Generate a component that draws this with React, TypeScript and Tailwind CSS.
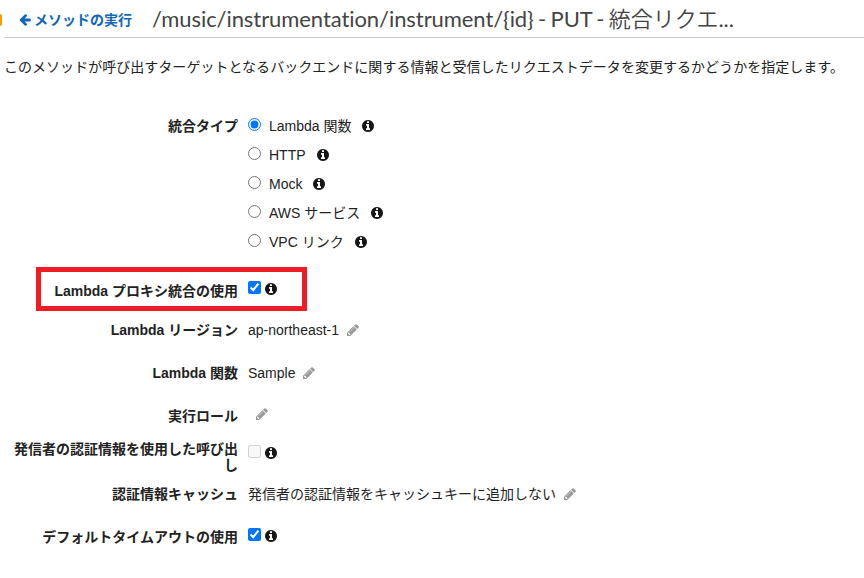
import React from 'react';

const Info = ({ className = '' }: { className?: string }) => (
  <svg viewBox="128 128 1536 1536" className={`size-3 shrink-0 fill-[#161616] ${className}`}>
    <path d="M1152 1376v-160q0-14-9-23t-23-9h-96v-512q0-14-9-23t-23-9h-320q-14 0-23 9t-9 23v160q0 14 9 23t23 9h96v320h-96q-14 0-23 9t-9 23v160q0 14 9 23t23 9h448q14 0 23-9t9-23zm-128-896v-160q0-14-9-23t-23-9h-192q-14 0-23 9t-9 23v160q0 14 9 23t23 9h192q14 0 23-9t9-23zm640 416q0 209-103 385.5t-279.5 279.5-385.5 103-385.5-103-279.5-279.5-103-385.5 103-385.5 279.5-279.5 385.5-103 385.5 103 279.5 279.5 103 385.5z" />
  </svg>
);

const Pencil = ({ className = 'ml-2' }: { className?: string }) => (
  <svg viewBox="128 128 1536 1536" className={`size-3 shrink-0 fill-[#999] ${className}`}>
    <path d="M491 1536l91-91-235-235-91 91v107h128v128h107zm523-928q0-22-22-22-10 0-17 7l-542 542q-7 7-7 17 0 22 22 22 10 0 17-7l542-542q7-7 7-17zm-54-192l416 416-832 832h-416v-416zm683 96q0 53-37 90l-166 166-416-416 166-165q36-38 90-38 53 0 91 38l235 234q37 39 37 91z" />
  </svg>
);

const ArrowLeft = () => (
  <svg viewBox="128 160 1536 1600" className="ml-[15px] mt-[2px] size-3 shrink-0 fill-[#1166bb]">
    <path d="M1664 896v128q0 53-32.5 90.5t-84.5 37.5h-704l293 294q38 36 38 90t-38 90l-75 76q-37 37-90 37-52 0-91-37l-651-652q-37-37-37-90 0-52 37-91l651-650q38-38 91-38 52 0 90 38l75 74q38 38 38 91t-38 91l-293 293h704q52 0 84.5 37.5t32.5 90.5z" />
  </svg>
);

function Row({ label, className, children }: { label: string; className: string; children: React.ReactNode }) {
  return (
    <div className={`flex ${className}`}>
      <div className="w-[238px] shrink-0 pl-3 text-right font-bold">{label}</div>
      <div className="ml-[10px] flex h-5 items-center whitespace-nowrap">{children}</div>
    </div>
  );
}

const Check = ({ checked, disabled }: { checked?: boolean; disabled?: boolean }) => (
  <input type="checkbox" className="mr-1 mb-[3px] size-[13px]" defaultChecked={checked} disabled={disabled} />
);

const types = ['Lambda 関数', 'HTTP', 'Mock', 'AWS サービス', 'VPC リンク'];

export default function App() {
  return (
    <div className="h-[578px] w-[864px] overflow-hidden bg-white font-['Liberation_Sans','Noto_Sans_CJK_JP',sans-serif] text-sm leading-5 text-[#222]">
      <header className="flex h-[38px] items-center">
        <span className="mt-[1px] h-3 w-[2px] shrink-0 rounded-r-full bg-[#ff9900]" />
        <div className="ml-[2px] flex h-[38px] flex-1 items-center border-b border-[#ccc]">
          <ArrowLeft />
          <span className="ml-[3px] pt-[3px] font-bold text-[#1166bb]">メソッドの実行</span>
          <h1 className="ml-5 font-['Lato','Noto_Sans_CJK_JP',sans-serif] text-[22px] tracking-[-0.07px] whitespace-nowrap text-[#444] [font-variant-ligatures:none] [word-spacing:-1.2px]">
            /music/instrumentation/instrument/{'{id}'} - PUT - <span className="font-[350]">統合リクエ</span>...
          </h1>
        </div>
      </header>
      <p className="mt-[19px] ml-1 tracking-[0.03px] whitespace-nowrap">このメソッドが呼び出すターゲットとなるバックエンドに関する情報と受信したリクエストデータを変更するかどうかを指定します。</p>
      <div className="mt-[39px] flex">
        <div className="w-[238px] text-right font-bold">統合タイプ</div>
        <div className="ml-[10px] flex flex-col gap-[9px]">
          {types.map((t, i) => (
            <label key={t} className="flex h-5 items-center">
              <input type="radio" name="type" defaultChecked={i === 0} className="mr-2 mb-[3px] size-[13px]" />
              <span className="mr-[11px]">{t}</span>
              <Info />
            </label>
          ))}
        </div>
      </div>
      <div className="mt-[15px] ml-9 flex h-11 w-[271px] items-center border-5 border-[#ee1c25]">
        <div className="w-[197px] shrink-0 pt-1 text-right font-bold">Lambda プロキシ統合の使用</div>
        <div className="ml-[10px] flex h-5 items-center">
          <Check checked />
          <Info />
        </div>
      </div>
      <Row className="mt-[9px]" label="Lambda リージョン">ap-northeast-1<Pencil /></Row>
      <Row className="mt-[23px]" label="Lambda 関数">Sample<Pencil /></Row>
      <Row className="mt-[23px]" label="実行ロール"><Pencil className="mb-1 ml-2" /></Row>
      <Row className="mt-[15px] leading-4" label="発信者の認証情報を使用した呼び出し">
        <div className="flex items-center pt-4 pb-3">
          <Check disabled />
          <Info />
        </div>
      </Row>
      <Row className="mt-[11px]" label="認証情報キャッシュ">発信者の認証情報をキャッシュキーに追加しない<Pencil /></Row>
      <Row className="mt-[23px]" label="デフォルトタイムアウトの使用">
        <div className="flex items-center pb-[3px]">
          <Check checked />
          <Info />
        </div>
      </Row>
    </div>
  );
}
